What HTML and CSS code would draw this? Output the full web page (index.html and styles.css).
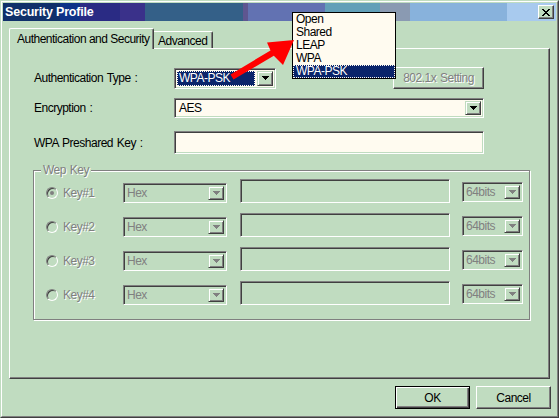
FILE: index.html
```html
<!DOCTYPE html>
<html>
<head>
<meta charset="utf-8">
<link rel="stylesheet" href="styles.css">
</head>
<body>
<div class="window">
  <div class="window-inner">
    <div class="titlebar">
      <span class="title">Security Profile</span>
      <span class="close"><svg width="8" height="7" viewBox="0 0 8 7"><path d="M0 0h2v1h1v1h2v-1h1v-1h2v1h-1v1h-1v1h-1v1h1v1h1v1h1v1h-2v-1h-1v-1h-2v1h-1v1h-2v-1h1v-1h1v-1h1v-1h-1v-1h-1v-1h-1z" fill="#000"/></svg></span>
    </div>
    <div class="body">
      <div class="tabs">
        <div class="tab active">Authentication and Security</div>
        <div class="tab">Advanced</div>
      </div>
      <div class="panel">
        <div class="form-row r1">
          <span class="label">Authentication Type :</span>
          <div class="combo auth">
            <span class="value"><span class="hl">WPA-PSK</span></span>
            <span class="drop"><svg width="7" height="4" viewBox="0 0 7 4"><path d="M0 0h7v1h-1v1h-1v1h-1v1h-1v-1h-1v-1h-1v-1h-1z" fill="#000"/></svg></span>
          </div>
          <span class="btn setting disabled">802.1x Setting</span>
        </div>
        <div class="form-row r2">
          <span class="label">Encryption :</span>
          <div class="combo enc">
            <span class="value">AES</span>
            <span class="drop"><svg width="7" height="4" viewBox="0 0 7 4"><path d="M0 0h7v1h-1v1h-1v1h-1v1h-1v-1h-1v-1h-1v-1h-1z" fill="#000"/></svg></span>
          </div>
        </div>
        <div class="form-row r3">
          <span class="label">WPA Preshared Key :</span>
          <div class="field key"></div>
        </div>
        <div class="group">
          <span class="legend">Wep Key</span>
          <div class="wep-row">
            <span class="radio-cell"><span class="radio checked"></span><span class="dis">Key#1</span></span>
            <div class="combo dcombo hex"><span class="value">Hex</span><span class="drop"><svg width="7" height="4" viewBox="0 0 7 4"><path d="M0 0h7v1h-1v1h-1v1h-1v1h-1v-1h-1v-1h-1v-1h-1z" fill="#808080"/></svg></span></div>
            <div class="field dfield"></div>
            <div class="combo dcombo bits"><span class="value">64bits</span><span class="drop"><svg width="7" height="4" viewBox="0 0 7 4"><path d="M0 0h7v1h-1v1h-1v1h-1v1h-1v-1h-1v-1h-1v-1h-1z" fill="#808080"/></svg></span></div>
          </div>
          <div class="wep-row">
            <span class="radio-cell"><span class="radio"></span><span class="dis">Key#2</span></span>
            <div class="combo dcombo hex"><span class="value">Hex</span><span class="drop"><svg width="7" height="4" viewBox="0 0 7 4"><path d="M0 0h7v1h-1v1h-1v1h-1v1h-1v-1h-1v-1h-1v-1h-1z" fill="#808080"/></svg></span></div>
            <div class="field dfield"></div>
            <div class="combo dcombo bits"><span class="value">64bits</span><span class="drop"><svg width="7" height="4" viewBox="0 0 7 4"><path d="M0 0h7v1h-1v1h-1v1h-1v1h-1v-1h-1v-1h-1v-1h-1z" fill="#808080"/></svg></span></div>
          </div>
          <div class="wep-row">
            <span class="radio-cell"><span class="radio"></span><span class="dis">Key#3</span></span>
            <div class="combo dcombo hex"><span class="value">Hex</span><span class="drop"><svg width="7" height="4" viewBox="0 0 7 4"><path d="M0 0h7v1h-1v1h-1v1h-1v1h-1v-1h-1v-1h-1v-1h-1z" fill="#808080"/></svg></span></div>
            <div class="field dfield"></div>
            <div class="combo dcombo bits"><span class="value">64bits</span><span class="drop"><svg width="7" height="4" viewBox="0 0 7 4"><path d="M0 0h7v1h-1v1h-1v1h-1v1h-1v-1h-1v-1h-1v-1h-1z" fill="#808080"/></svg></span></div>
          </div>
          <div class="wep-row">
            <span class="radio-cell"><span class="radio"></span><span class="dis">Key#4</span></span>
            <div class="combo dcombo hex"><span class="value">Hex</span><span class="drop"><svg width="7" height="4" viewBox="0 0 7 4"><path d="M0 0h7v1h-1v1h-1v1h-1v1h-1v-1h-1v-1h-1v-1h-1z" fill="#808080"/></svg></span></div>
            <div class="field dfield"></div>
            <div class="combo dcombo bits"><span class="value">64bits</span><span class="drop"><svg width="7" height="4" viewBox="0 0 7 4"><path d="M0 0h7v1h-1v1h-1v1h-1v1h-1v-1h-1v-1h-1v-1h-1z" fill="#808080"/></svg></span></div>
          </div>
        </div>
      </div>
      <div class="buttons">
        <span class="btn default">OK</span>
        <span class="btn">Cancel</span>
      </div>
    </div>
  </div>
  <ul class="popup">
    <li>Open</li>
    <li>Shared</li>
    <li>LEAP</li>
    <li>WPA</li>
    <li class="sel">WPA-PSK</li>
  </ul>
  <svg class="arrow" width="559" height="418" viewBox="0 0 559 418">
    <polygon points="232.5,78.6 229.5,73.4 269.5,49.5 266,41.5 293,39 282,64 272.8,54.7" fill="#ff0000"/>
  </svg>
</div>
</body>
</html>
```
FILE: styles.css
```css
html, body {
  margin: 0;
  padding: 0;
  background: #C0DCC0;
}
body {
  font-family: "Liberation Sans", Arial, sans-serif;
  font-size: 12px;
  letter-spacing: -0.5px;
  word-spacing: 1px;
  color: #000;
}
.window {
  position: relative;
  width: 559px;
  height: 418px;
  box-sizing: border-box;
  border: 1px solid;
  border-color: #C0DCC0 #404040 #404040 #C0DCC0;
  background: #C0DCC0;
  overflow: hidden;
}
.window-inner {
  height: 100%;
  box-sizing: border-box;
  border: 1px solid;
  border-color: #fff #808080 #808080 #fff;
  display: flex;
  flex-direction: column;
}
.titlebar {
  margin: 1px 1px 0 1px;
  height: 18px;
  display: flex;
  align-items: center;
  justify-content: space-between;
  background: linear-gradient(to right,
    #10306A 0, #10306A 57px,
    #0E3288 57px, #0E3288 77px,
    #2A2B84 77px, #2A2B84 117px,
    #3A318A 117px, #3A318A 142px,
    #346088 142px, #346088 240px,
    #5E5690 240px, #5E5690 245px,
    #6272B2 245px, #6272B2 322px,
    #62A0B8 322px, #62A0B8 377px,
    #8A9AB2 377px, #8A9AB2 407px,
    #88B2DC 407px, #88B2DC 504px,
    #A8CAEE 504px, #A8CAEE 100%);
}
.title {
  color: #fff;
  font-weight: bold;
  font-size: 12.5px;
  letter-spacing: -0.2px;
  word-spacing: 0;
  padding-left: 2px;
  line-height: 18px;
}
.close {
  width: 16px;
  height: 14px;
  margin-right: 2px;
  box-sizing: border-box;
  background: #C0DCC0;
  border: 1px solid;
  border-color: #fff #404040 #404040 #fff;
  box-shadow: inset -1px -1px #808080;
  display: flex;
  align-items: center;
  justify-content: center;
}
.close svg { display: block; shape-rendering: crispEdges; }

.body {
  flex: 1;
  padding: 7px 7px 0 7px;
  display: flex;
  flex-direction: column;
}
.tabs {
  display: flex;
  height: 21px;
  margin-bottom: -1px;
  position: relative;
  z-index: 1;
}
.tab {
  box-sizing: border-box;
  background: #C0DCC0;
  white-space: nowrap;
}
.tab.active {
  width: 145px;
  height: 21px;
  padding: 3px 0 0 7px;
  word-spacing: 0;
  border-top: 1px solid #fff;
  border-left: 1px solid #fff;
  border-right: 1px solid #404040;
  border-top-left-radius: 2px;
  border-top-right-radius: 2px;
  box-shadow: inset -1px 0 #808080;
}
.tab:not(.active) {
  width: 59px;
  height: 17px;
  margin-top: 3px;
  padding: 2px 0 0 4px;
  border-top: 1px solid #fff;
  border-right: 1px solid #404040;
  border-top-right-radius: 2px;
  box-shadow: inset -1px 0 #808080;
}
.panel {
  height: 331px;
  box-sizing: border-box;
  border: 1px solid;
  border-color: #fff #404040 #404040 #fff;
  box-shadow: inset -1px -1px #808080;
  padding: 18px 0 0 24px;
}
.form-row {
  display: flex;
  align-items: center;
}
.label {
  width: 140px;
  flex: none;
}
.r1 { height: 22px; }
.r2 { margin-top: 9px; height: 20px; }
.r3 { margin-top: 13px; height: 23px; }

/* sunken controls */
.combo, .field {
  box-sizing: border-box;
  border: 1px solid;
  border-color: #808080 #fff #fff #808080;
  box-shadow: inset 1px 1px #404040, inset -1px -1px #C0DCC0;
  background: #FFFBF0;
}
.combo {
  display: flex;
  align-items: stretch;
  padding: 2px;
}
.combo .value {
  flex: 1;
  display: flex;
  align-items: center;
  padding-left: 1px;
  white-space: nowrap;
  overflow: hidden;
}
.drop {
  width: 16px;
  flex: none;
  box-sizing: border-box;
  background: #C0DCC0;
  border: 1px solid;
  border-color: #C0DCC0 #404040 #404040 #C0DCC0;
  box-shadow: inset 1px 1px #fff, inset -1px -1px #808080;
  display: flex;
  align-items: center;
  justify-content: center;
}
.drop svg { display: block; shape-rendering: crispEdges; }
.auth {
  width: 102px;
  height: 21px;
}
.auth .value { padding: 0; }
.hl {
  background: #0A246A;
  color: #fff;
  flex: 1;
  align-self: stretch;
  display: flex;
  align-items: center;
  padding-left: 2px;
  margin-right: 2px;
  outline: 1px dotted #FFFBF0;
  outline-offset: -1px;
}
.enc {
  width: 310px;
  height: 20px;
}
.enc .value { padding-left: 2px; }
.key {
  width: 310px;
  height: 23px;
}

/* buttons */
.btn {
  box-sizing: border-box;
  display: flex;
  align-items: center;
  justify-content: center;
  background: #C0DCC0;
  border: 1px solid;
  border-color: #fff #404040 #404040 #fff;
  box-shadow: inset -1px -1px #808080;
  width: 75px;
  height: 23px;
}
.setting {
  width: 91px;
  height: 22px;
  margin-left: 117px;
}
.disabled {
  color: #808080;
  text-shadow: 1px 1px #fff;
}
.default {
  border: 1px solid #000;
  box-shadow: inset 1px 1px #fff, inset -1px -1px #404040, inset -2px -2px #808080;
}
.buttons {
  display: flex;
  justify-content: flex-end;
  gap: 6px;
  margin-top: 7px;
  margin-right: -1px;
}

/* group */
.group {
  position: relative;
  margin-top: 16px;
  margin-left: -1px;
  width: 497px;
  height: 150px;
  box-sizing: border-box;
  border: 1px solid #808080;
  box-shadow: inset 1px 1px #fff, 1px 1px #fff;
  padding: 8px 0 0 12px;
  display: flex;
  flex-direction: column;
  gap: 10px;
}
.legend {
  position: absolute;
  top: -8px;
  left: 7px;
  padding: 0 2px;
  background: #C0DCC0;
  color: #808080;
  text-shadow: 1px 1px #fff;
  line-height: 14px;
}
.wep-row {
  display: flex;
  align-items: flex-end;
  height: 24px;
}
.radio-cell {
  width: 77px;
  height: 20px;
  flex: none;
  display: flex;
  align-items: center;
  gap: 5px;
}
.radio {
  width: 12px;
  height: 12px;
  box-sizing: border-box;
  border-radius: 50%;
  border: 1px solid;
  border-color: #808080 #fff #fff #808080;
  box-shadow: inset 1px 1px #404040;
  position: relative;
  flex: none;
}
.radio.checked::after {
  content: "";
  position: absolute;
  left: 3px;
  top: 3px;
  width: 4px;
  height: 4px;
  border-radius: 50%;
  background: #808080;
}
.dis {
  color: #808080;
  text-shadow: 1px 1px #fff;
}
.dcombo {
  background: #C0DCC0;
  color: #808080;
  height: 20px;
}
.hex { width: 104px; }
.dfield {
  background: #C0DCC0;
  width: 210px;
  height: 24px;
  margin-left: 13px;
}
.bits {
  width: 61px;
  margin-left: 12px;
  margin-bottom: 1px;
}

/* popup list over content */
.popup {
  position: absolute;
  left: 291px;
  top: 11px;
  width: 104px;
  margin: 0;
  padding: 0;
  list-style: none;
  box-sizing: border-box;
  border: 1px solid #000;
  background: #FFFBF0;
  z-index: 5;
}
.popup li {
  height: 13px;
  line-height: 13px;
  padding-left: 3px;
}
.popup li.sel {
  background: #0A246A;
  color: #fff;
  outline: 1px dotted #FFFBF0;
  outline-offset: -1px;
}
.arrow {
  position: absolute;
  left: 0;
  top: 0;
  z-index: 6;
  pointer-events: none;
}
```
